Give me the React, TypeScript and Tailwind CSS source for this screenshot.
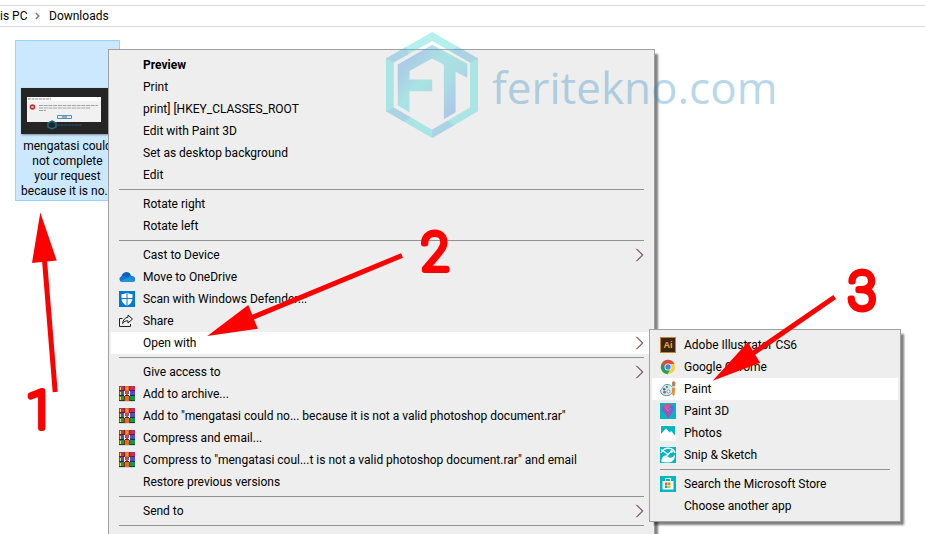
import type { ReactNode } from "react";
import clsx from "clsx";

type MenuEntry =
  | { kind: "separator" }
  | {
      kind: "item";
      label: string;
      icon?: ReactNode;
      bold?: boolean;
      active?: boolean;
      arrow?: boolean;
      submenu?: MenuEntry[];
    };

const separator: MenuEntry = { kind: "separator" };

function item(label: string, options: Partial<Extract<MenuEntry, { kind: "item" }>> = {}): MenuEntry {
  return { kind: "item", label, ...options };
}

function OneDriveIcon() {
  return (
    <svg viewBox="0 0 16 16" className="size-4">
      <path d="M3 13a3 3 0 0 1-.6-5.800A5 5 0 0 1 11 4.600l1 2 3.200 2.400a2.300 2.300 0 0 1-1.600 4z" fill="#1377d0" />
      <path d="M3.400 7A4.600 4.600 0 0 1 11.200 5l-1 3.800-4-1.200z" fill="#0b62b5" />
      <path d="M9.600 8.200A3.400 3.400 0 0 1 13 7a3.100 3.100 0 0 1 3 3c0 1.800-1 3-2.600 3z" fill="#1b82dc" />
      <path d="M1.200 12.200l8.400-3.800 6 3.400c-.5.800-1.100 1.200-2 1.200H3c-.8 0-1.300-.3-1.800-.8z" fill="#2392e4" />
    </svg>
  );
}

function DefenderIcon() {
  return (
    <svg viewBox="0 0 16 16" className="size-4">
      <path d="M0 0h16v16H0z" fill="#0078d7" />
      <path
        d="M8 1.500c1.600 1.200 3.400 1.700 5.500 1.700v4.300c0 3.400-2 5.700-5.500 7.300-3.500-1.600-5.500-3.900-5.500-7.300V3.200C4.600 3.200 6.400 2.700 8 1.500z"
        fill="#fff"
      />
      <path d="M7.500 1h1v14h-1zM2 7h12v1H2z" fill="#0078d7" />
    </svg>
  );
}

function ShareIcon() {
  return (
    <svg viewBox="0 0 16 16" className="size-4" fill="none" stroke="#222">
      <path d="M3.500 5.500h-3v8h11V11" />
      <path d="M9 2l4.500 4L9 10V7.800C6.500 7.700 5 8.500 3.600 10.500 4 7 6 4.500 9 4.200z" />
    </svg>
  );
}

function WinRarIcon() {
  return (
    <svg viewBox="0 0 16 16" className="size-4" shapeRendering="crispEdges">
      <path d="M0 0h16v5H0z" fill="#cc2a5a" />
      <path d="M0 5h16v5H0z" fill="#4b4fc0" />
      <path d="M0 10h16v5H0z" fill="#189447" />
      <path d="M0 0h16v1H0z" fill="#a03560" />
      <path d="M0 4h16v1H0z" fill="#6d1638" />
      <path d="M0 9h16v1H0z" fill="#22236b" />
      <path d="M0 14h16v1H0z" fill="#0c4c24" />
      <path d="M0 15h16v1H0z" fill="#d4d4d4" />
      <path d="M1 1h1v3H1zM1 6h1v3H1zM1 11h1v3H1z" fill="#f2d13c" />
      <path d="M5 0h1v5H5zM10 0h1v5h-1zM5 10h1v5H5zM10 10h1v5h-1z" fill="#7c2a22" />
      <path d="M6 0h4v5H6zM6 10h4v5H6z" fill="#ee6a1f" />
      <path d="M7 1h2v3H7z" fill="#f78f3c" />
      <path d="M5 5h6v5H5z" fill="#f3eeea" />
      <path d="M7 5h2v4H7z" fill="#c9503a" />
      <path d="M6 5h1v3H6zM9 5h1v3H9z" fill="#6d6270" />
      <path d="M6 9h4v1H6z" fill="#4a2420" />
    </svg>
  );
}

function IllustratorIcon() {
  return (
    <svg viewBox="0 0 16 16" className="size-4">
      <path d="M0 0h16v16H0z" fill="#c8842c" />
      <path d="M1 1h14v14H1z" fill="#3a2611" />
      <text
        x="8"
        y="11"
        textAnchor="middle"
        fontFamily="Liberation Sans, sans-serif"
        fontWeight="700"
        fontSize="9"
        fill="#ffa63c"
      >
        Ai
      </text>
    </svg>
  );
}

function ChromeIcon() {
  return (
    <svg viewBox="0 0 16 16" className="size-4">
      <circle cx="8" cy="8" r="7.200" fill="#f7cf3d" />
      <path d="M8 8L1.760 4.400A7.200 7.200 0 0 1 14.240 4.400L14.400 5H8z" fill="#dd4b3e" />
      <path d="M1.760 4.400A7.200 7.200 0 0 0 7.400 15.180L10.800 9.600 8 8z" fill="#1fa05a" />
      <path d="M1.760 4.400L4.600 9.600 8 8V5z" fill="#1fa05a" />
      <path d="M1.760 4.400L4 8 8 4.700z" fill="#dd4b3e" />
      <circle cx="8" cy="8" r="3.500" fill="#f4f4f4" />
      <circle cx="8" cy="8" r="2.700" fill="#4285e8" />
    </svg>
  );
}

function PaintIcon() {
  return (
    <svg viewBox="0 0 16 16" className="size-4">
      <path
        d="M7 3.500c4 0 6 2.200 6 5.500 0 3-2.500 5.600-6.500 5.600C2.800 14.600.6 12.600.6 9.600c0-1.500 1.600-1.400 2-2.400C3 5 4.500 3.500 7 3.500z"
        fill="#d7ebf7"
        stroke="#4f97c4"
      />
      <circle cx="7" cy="6" r="1.300" fill="#62ae3a" />
      <circle cx="4.200" cy="8.200" r="1.200" fill="#3568c0" />
      <circle cx="4.600" cy="11.200" r="1.400" fill="#e5532c" />
      <circle cx="8.400" cy="10.500" r="1.600" fill="#fff" stroke="#4f97c4" strokeWidth=".8" />
      <path d="M12 1.500L13 0l2.500 1-.3 4.200h-3z" fill="#b9835a" />
      <path d="M12 5h3v2h-3z" fill="#c9ced2" />
      <path d="M12 7h3l-.4 6.500-1.100 1.500-1.200-1.500z" fill="#f08a24" />
    </svg>
  );
}

function Paint3DIcon() {
  return (
    <svg viewBox="0 0 16 16" className="size-4">
      <path d="M0 0h16v16H0z" fill="#00b7c3" />
      <path d="M8 1c3.600 0 6 2 6 5 0 3.200-3.500 4.500-5 9H7.500C7 10.500 2 9.500 2 6c0-3 2.400-5 6-5z" fill="#8b5cc9" />
      <path d="M3 3.500C5 1 9 .6 11 2L8 6.500z" fill="#e0517b" />
      <path d="M11 2c2.500 1 3.500 3.500 2.700 5.500L9 7z" fill="#4d6fe0" />
      <path d="M4 8.500l4-1.500.8 7.500H7.500C7.200 11.500 5.500 10 4 8.500z" fill="#c2469a" />
      <path d="M5 4l3 4 3-3" stroke="#c98be0" strokeWidth=".7" fill="none" />
    </svg>
  );
}

function PhotosIcon() {
  return (
    <svg viewBox="0 0 16 16" className="size-4">
      <path d="M0 0h16v16H0z" fill="#fff" />
      <path d="M1 1h14v9.500L11.200 6 9.600 7.500 6 3.500 1 9z" fill="#00b7c3" />
    </svg>
  );
}

function SnipIcon() {
  return (
    <svg viewBox="0 0 16 16" className="size-4">
      <path d="M0 0h16v16H0z" fill="#00b7c3" />
      <path d="M1 6C3 2.500 6 1 9 1.300c3 .2 5 2 6 4.700" fill="none" stroke="#fff" strokeWidth="1.500" />
      <path
        d="M1.500 15C1 12 3 8.500 5.500 8.500c2 0 2.500 2 4.500 2.300 2 .2 3.500-1.300 4.800-2.800.6 4-2.300 7.500-6.800 7.500z"
        fill="#fff"
      />
      <path d="M1 2.500l8 5.500M11 4.500L6.500 8.800" stroke="#fff" strokeWidth="1.300" />
      <circle cx="11.500" cy="4.500" r="1.300" fill="#fff" />
    </svg>
  );
}

function StoreIcon() {
  return (
    <svg viewBox="0 0 16 16" className="size-4">
      <path d="M0 0h16v16H0z" fill="#00b7c3" />
      <path d="M5.500 5V2.500h5V5" fill="none" stroke="#fff" />
      <path d="M2.500 5h11v8.500h-11z" fill="#fff" />
      <path d="M5 6.500h2.500V9H5z" fill="#f25022" />
      <path d="M8 6.500h2.500V9H8z" fill="#7fba00" />
      <path d="M5 9.500h2.500V12H5z" fill="#00a4ef" />
      <path d="M8 9.500h2.500V12H8z" fill="#ffb900" />
    </svg>
  );
}

function SubmenuArrow() {
  return (
    <svg viewBox="0 0 9 14" className="h-[14px] w-[9px]" fill="none">
      <path d="M2.300 1l6 6" stroke="#3f9be8" strokeWidth=".6" />
      <path d="M8.300 7l-6 6" stroke="#3f9be8" strokeWidth=".6" />
      <path d="M1.500 1l6 6-6 6" stroke="#6e1018" />
      <path d="M1 .5l1 1M1 13.500l1-1" stroke="#e8921f" />
    </svg>
  );
}

const openWithEntries: MenuEntry[] = [
  item("Adobe Illustrator CS6", { icon: <IllustratorIcon /> }),
  item("Google Chrome", { icon: <ChromeIcon /> }),
  item("Paint", { icon: <PaintIcon />, active: true }),
  item("Paint 3D", { icon: <Paint3DIcon /> }),
  item("Photos", { icon: <PhotosIcon /> }),
  item("Snip & Sketch", { icon: <SnipIcon /> }),
  separator,
  item("Search the Microsoft Store", { icon: <StoreIcon /> }),
  item("Choose another app"),
];

const contextEntries: MenuEntry[] = [
  item("Preview", { bold: true }),
  item("Print"),
  item("print] [HKEY_CLASSES_ROOT"),
  item("Edit with Paint 3D"),
  item("Set as desktop background"),
  item("Edit"),
  separator,
  item("Rotate right"),
  item("Rotate left"),
  separator,
  item("Cast to Device", { arrow: true }),
  item("Move to OneDrive", { icon: <OneDriveIcon /> }),
  item("Scan with Windows Defender...", { icon: <DefenderIcon /> }),
  item("Share", { icon: <ShareIcon /> }),
  item("Open with", { arrow: true, active: true, submenu: openWithEntries }),
  separator,
  item("Give access to", { arrow: true }),
  item("Add to archive...", { icon: <WinRarIcon /> }),
  item('Add to "mengatasi could no... because it is not a valid photoshop document.rar"', { icon: <WinRarIcon /> }),
  item("Compress and email...", { icon: <WinRarIcon /> }),
  item('Compress to "mengatasi coul...t is not a valid photoshop document.rar" and email', { icon: <WinRarIcon /> }),
  item("Restore previous versions"),
  separator,
  item("Send to", { arrow: true }),
  separator,
];

function Menu({ entries, label, className }: { entries: MenuEntry[]; label: string; className: string }) {
  return (
    <ul
      role="menu"
      aria-label={label}
      className={clsx(
        "absolute border border-[#a0a0a0] bg-[#eeeeee] px-[2px] py-1 shadow-[4px_4px_2px_-1px_rgba(0,0,0,0.5)]",
        className
      )}
    >
      {entries.map((entry, index) =>
        entry.kind === "separator" ? (
          <li key={index} role="separator" className="mx-2 flex h-[7px] items-center">
            <span className="h-px w-full bg-[#919191]" />
          </li>
        ) : (
          <li key={index} role="none" className="relative">
            <button
              type="button"
              role="menuitem"
              className={clsx(
                "flex h-[22px] w-full items-center gap-2 px-2 text-left whitespace-nowrap",
                entry.active && "bg-white",
                entry.bold && "font-bold"
              )}
            >
              <span className="size-4 shrink-0">{entry.icon}</span>
              <span className="flex-1">{entry.label}</span>
              {entry.arrow && <SubmenuArrow />}
            </button>
            {entry.submenu && (
              <Menu entries={entry.submenu} label={entry.label} className="-top-[3px] left-full -ml-[3px] w-[252px]" />
            )}
          </li>
        )
      )}
    </ul>
  );
}

function AddressBar() {
  return (
    <nav aria-label="Address" className="pt-[5px]">
      <div className="flex h-[22px] items-center border-y border-[#d9d9d9]">
        <a href="#this-pc" className="w-[35px]">is PC</a>
        <svg viewBox="0 0 5 8" className="mr-[9px] h-2 w-[5px]" fill="none" stroke="#777" strokeWidth="1.500">
          <path d="M.8 1l3 3-3 3" />
        </svg>
        <a href="#downloads">Downloads</a>
      </div>
    </nav>
  );
}

function Thumbnail() {
  return (
    <svg viewBox="0 0 94 46" className="h-[46px] w-[94px] shadow-[1px_1px_2px_rgba(0,0,0,0.4)]">
      <path d="M0 0h94v46H0z" fill="#252525" />
      <path d="M6 9h74v25H6z" fill="#f1f1f1" />
      <path d="M6 9h74v4H6z" fill="#fff" />
      <path d="M7 11h23" stroke="#888" strokeDasharray="3 .6" />
      <circle cx="11.500" cy="19" r="2.800" fill="#cc2b31" />
      <path d="M10.500 18l2 2m0-2l-2 2" stroke="#fff" strokeWidth=".8" />
      <path d="M18 17.500h59M18 20h52M18 22.500h7" stroke="#a3a3a3" strokeDasharray="4 .7" />
      <path d="M36.500 27.500h14v3h-14z" fill="#dfeaf3" stroke="#4c95c6" />
      <path d="M41 29h5" stroke="#666" />
      <path d="M31 33l4 2v4l-4 2-4-2v-4z" fill="none" stroke="#1f6a85" strokeWidth="1.500" />
      <path d="M36 37h25" stroke="#1d4960" strokeWidth="1.500" strokeDasharray="3 .6" />
    </svg>
  );
}

function FileTile() {
  return (
    <figure className="mt-[13px] ml-[15px] flex h-[161px] w-[105px] flex-col items-center justify-end border border-[#99d1ff] bg-[#cce8ff] pb-px">
      <Thumbnail />
      <figcaption className="mt-[5px] text-center leading-[15px] whitespace-nowrap">
        mengatasi could
        <br />
        not complete
        <br />
        your request
        <br />
        because it is no...
      </figcaption>
    </figure>
  );
}

function Watermark() {
  return (
    <div className="pointer-events-none absolute top-[32px] left-[386px] flex items-center gap-[14px]">
      <svg viewBox="48 36 275 317" className="h-[106px] w-[92px] opacity-35">
        <defs>
          <linearGradient id="letters" x1="0" y1="0" x2="1" y2="1">
            <stop offset="0" stopColor="#3390dc" />
            <stop offset=".2" stopColor="#3390dc" />
            <stop offset=".42" stopColor="#2ccfcf" />
            <stop offset=".6" stopColor="#2cbfd0" />
            <stop offset=".85" stopColor="#3383dc" />
          </linearGradient>
        </defs>
        <path
          fillRule="evenodd"
          fill="#2cd5cf"
          d="M186 36l137 79v158l-137 80-138-80V115zM186 63L71 127v135l115 66 113-66V127z"
        />
        <path
          d="M48 115l60-35 8 22-45 25zM299 127l24-12-62-36-20 15zM48 273l23-11 50 29-18 14zM186 353v-25l46-27 20 14z"
          fill="#3793cf"
          fillOpacity=".75"
        />
        <path
          fill="url(#letters)"
          d="M83 133l103-59 105 57v42l-35-18v121l-35 21V134l-35-19-68 38v25h68v35h-68v63l-35-20z"
        />
      </svg>
      <span className="pt-1 font-['Open_Sans',sans-serif] text-[44px] leading-[60px] text-[#3790c3] opacity-35">
        feritekno.com
      </span>
    </div>
  );
}

// Red arrows and step numbers drawn over the window
function Annotations() {
  return (
    <svg
      viewBox="0 0 925 534"
      className="pointer-events-none absolute top-0 left-0 h-[534px] w-[925px]"
      fill="#ff0000"
      stroke="#ff0000"
    >
      <g stroke="none">
        <path d="M40.300 212.500L56.700 260.500 32 263z" />
        <path d="M207.300 336L248.300 305l9.500 23.800z" />
        <path d="M712.700 380.700l35-38.500 12.400 20.500z" />
      </g>
      <path d="M44.500 260L55.200 392M252 317.500L402 255.500M752 354l82.700-57" strokeWidth="5" fill="none" />
      <g
        fontFamily="Roboto, Arial, sans-serif"
        fontWeight="100"
        fontSize="51"
        strokeWidth="6"
        strokeLinejoin="round"
        textAnchor="middle"
      >
        <text x="40" y="428">1</text>
        <text x="435" y="270">2</text>
        <text x="862" y="309">3</text>
      </g>
    </svg>
  );
}

export default function App() {
  return (
    <main className="relative h-screen overflow-hidden bg-white font-['Roboto','Segoe_UI',sans-serif] text-xs text-black">
      <AddressBar />
      <FileTile />
      <Menu entries={contextEntries} label="File actions" className="top-[49px] left-[108px] min-h-full w-[547px]" />
      <Watermark />
      <Annotations />
    </main>
  );
}
